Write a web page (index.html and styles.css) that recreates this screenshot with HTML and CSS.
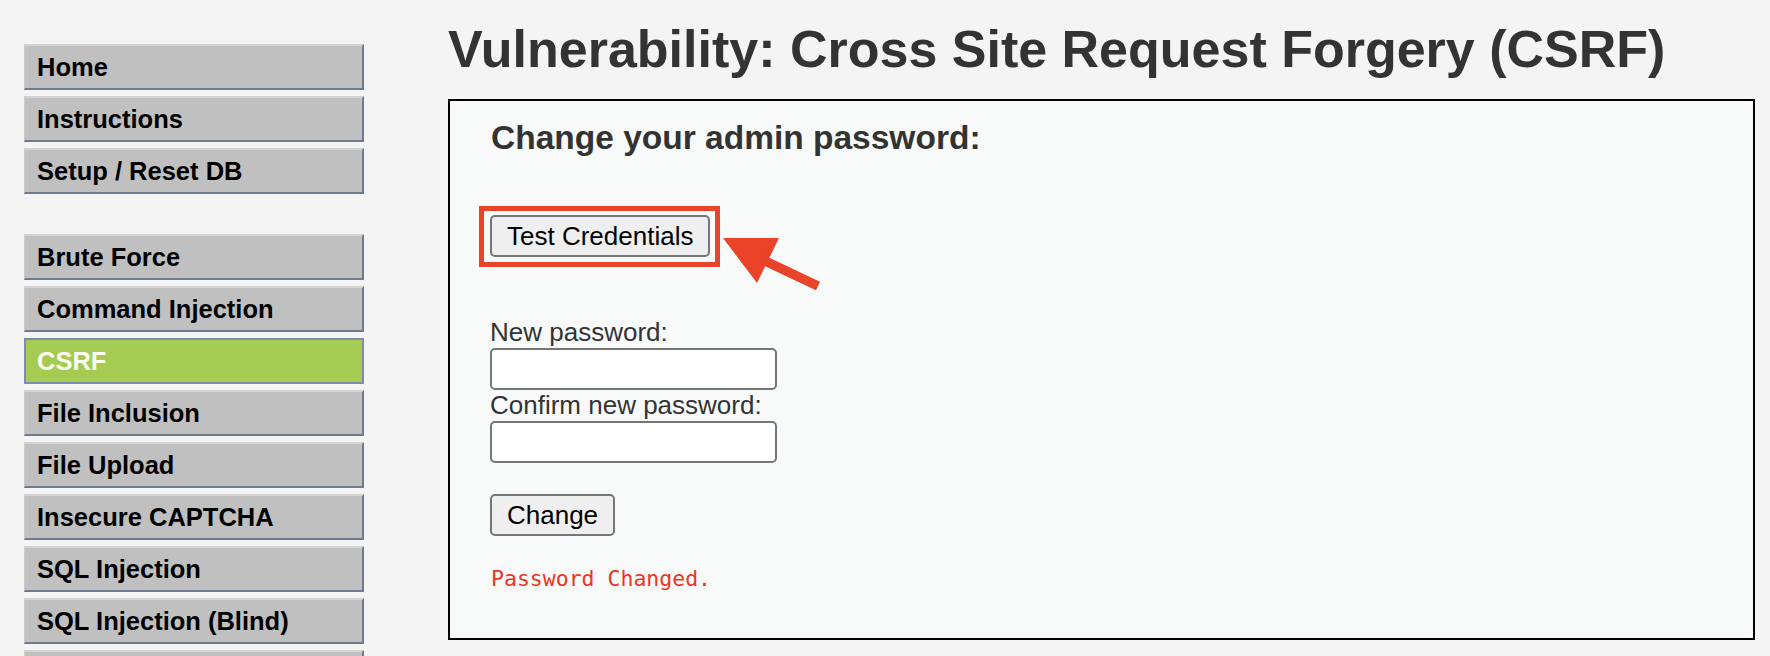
FILE: index.html
```html
<!DOCTYPE html>
<html lang="en">
<head>
<meta charset="utf-8">
<title>Vulnerability: Cross Site Request Forgery (CSRF)</title>
<link rel="stylesheet" href="styles.css">
</head>
<body>
<div class="page">
  <nav class="sidebar">
    <ul class="menu">
      <li><a href="#">Home</a></li>
      <li><a href="#">Instructions</a></li>
      <li><a href="#">Setup / Reset DB</a></li>
    </ul>
    <ul class="menu">
      <li><a href="#">Brute Force</a></li>
      <li><a href="#">Command Injection</a></li>
      <li class="selected"><a href="#">CSRF</a></li>
      <li><a href="#">File Inclusion</a></li>
      <li><a href="#">File Upload</a></li>
      <li><a href="#">Insecure CAPTCHA</a></li>
      <li><a href="#">SQL Injection</a></li>
      <li><a href="#">SQL Injection (Blind)</a></li>
      <li><a href="#">Weak Session IDs</a></li>
    </ul>
  </nav>
  <main class="main">
    <h1 class="title">Vulnerability: Cross Site Request Forgery (CSRF)</h1>
    <div class="code-area">
      <h3 class="subtitle">Change your admin password:</h3>
      <div class="highlight">
        <button class="btn" type="button">Test Credentials</button>
        <svg class="arrow" width="110" height="70" viewBox="0 0 110 70" aria-hidden="true">
          <polygon points="4,5 60,5 38,50" fill="#e9432a"/>
          <line x1="42" y1="26" x2="99" y2="53" stroke="#e9432a" stroke-width="9.5"/>
        </svg>
      </div>
      <form class="form">
        <label class="label">New password:</label>
        <input class="field" type="password">
        <label class="label">Confirm new password:</label>
        <input class="field" type="password">
        <div class="actions"><button class="btn" type="button">Change</button></div>
      </form>
      <pre class="message">Password Changed.</pre>
    </div>
  </main>
</div>
</body>
</html>
```
FILE: styles.css
```css
html, body {
  margin: 0;
  padding: 0;
  overflow: hidden;
  background: #f4f4f4;
}
body {
  font-family: "Liberation Sans", Arial, sans-serif;
  color: #333;
}
.page {
  display: flex;
  align-items: flex-start;
  gap: 84px;
  padding-left: 24px;
}
.sidebar {
  width: 340px;
  flex: none;
  padding-top: 44px;
  display: flex;
  flex-direction: column;
  gap: 40px;
}
.menu {
  list-style: none;
  margin: 0;
  padding: 0;
  display: flex;
  flex-direction: column;
  gap: 6px;
}
.menu a {
  display: block;
  height: 42px;
  line-height: 42px;
  padding-left: 12px;
  background: #c0c0c0;
  border-top: 2px solid #d4d4d4;
  border-left: 1px solid #cbcbcb;
  border-right: 2px solid #6e7b8e;
  border-bottom: 2px solid #6e7b8e;
  color: #000;
  font-weight: bold;
  font-size: 25.5px;
  text-decoration: none;
}
.menu .selected a {
  background: #a6cb52;
  border: 2px solid #7d8db0;
  padding-left: 11px;
  color: #fbfbf0;
}
.main {
  width: 1307px;
  flex: none;
  padding-top: 19px;
}
.title {
  margin: 0 0 20px;
  font-size: 52px;
  line-height: 60px;
  font-weight: bold;
  color: #333;
  white-space: nowrap;
}
.code-area {
  border: 2px solid #000;
  background: #f8f9f9;
  padding: 17px 0 44px 41px;
}
.subtitle {
  margin: 0 0 48px;
  font-size: 33.5px;
  line-height: 40px;
  font-weight: bold;
  color: #333;
}
.highlight {
  position: relative;
  display: inline-block;
  margin-left: -12px;
  border: 5px solid #e9432a;
  padding: 4px 5px 5px 6px;
  vertical-align: top;
}
.btn {
  display: block;
  height: 42px;
  padding: 0 15px;
  margin: 0;
  border: 2px solid #767676;
  border-radius: 5px;
  background: #efefef;
  color: #000;
  font-family: "Liberation Sans", Arial, sans-serif;
  font-size: 26px;
}
.arrow {
  position: absolute;
  left: 235px;
  top: 22px;
}
.form {
  display: flex;
  flex-direction: column;
  align-items: flex-start;
  padding-top: 50px;
  margin-left: -1px;
}
.label {
  display: block;
  font-size: 26px;
  line-height: 31px;
  color: #333;
}
.field {
  box-sizing: border-box;
  width: 287px;
  height: 42px;
  margin: 0;
  border: 2px solid #767676;
  border-radius: 5px;
  background: #fff;
}
.actions {
  margin-top: 31px;
}
.message {
  margin: 28px 0 0;
  font-family: "DejaVu Sans Mono", "Liberation Mono", monospace;
  font-size: 21.5px;
  line-height: 30px;
  color: #ee3524;
}
```
